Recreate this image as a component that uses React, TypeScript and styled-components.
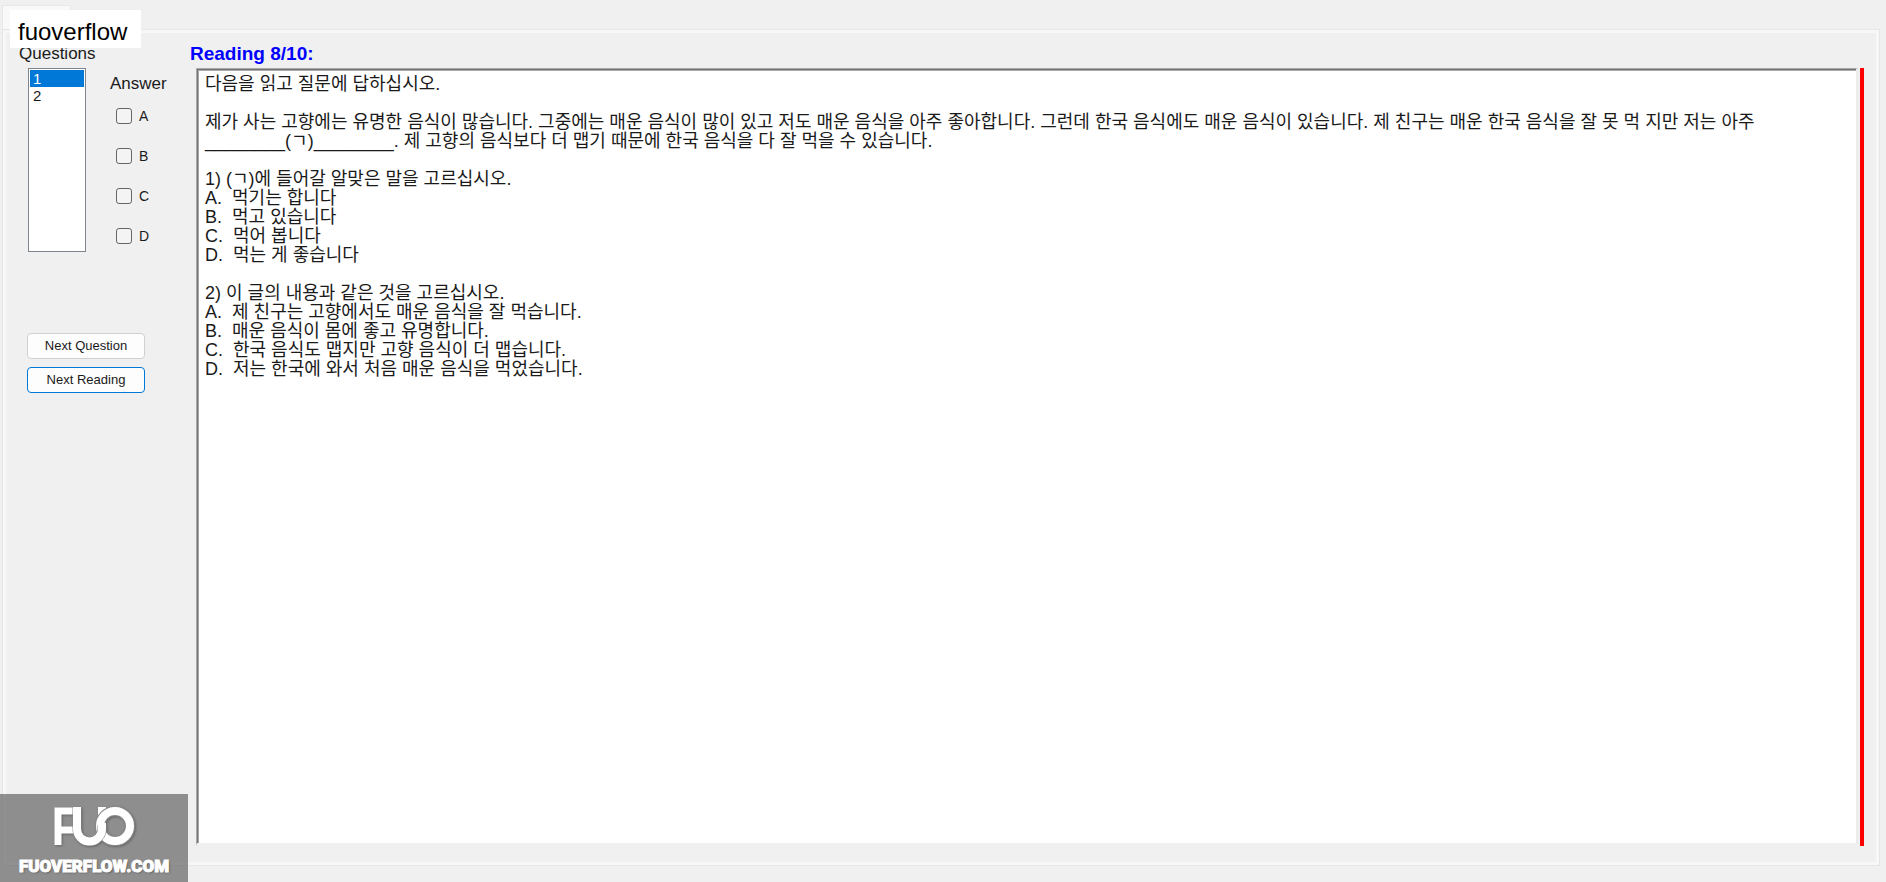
import React, { useState } from "react";
import styled, { createGlobalStyle } from "styled-components";

const sans = `"Liberation Sans", "Noto Sans CJK KR", sans-serif`;

const GlobalStyle = createGlobalStyle`
  *, *::before, *::after { box-sizing: border-box; }
  body { margin: 0; background: #f0f0f0; color: #1a1a1a; font-family: ${sans}; }
`;

const Window = styled.div`
  position: relative;
  display: flex;
  flex-direction: column;
  min-height: 100vh;
  padding: 5px 6px 16px 2px;
`;

const TabStrip = styled.div`
  display: flex;
  height: 24px;
`;

const Tab = styled.div`
  width: 69px;
  background: #f9f9f9;
  border: 1px solid #e8e8e8;
  border-bottom: none;
`;

const TabPage = styled.main`
  flex: 1;
  display: flex;
  padding: 14px 15px 19px 13px;
  border: 1px solid #e6e6e6;
  box-shadow: inset 0 0 0 3px #f7f7f7;
`;

const Sidebar = styled.aside`
  width: 172px;
  flex-shrink: 0;
  display: flex;
  flex-direction: column;
`;

const Label = styled.label`
  padding-left: 3px;
  font-size: 17px;
  line-height: 20px;
`;

const AnswerArea = styled.div`
  display: flex;
  align-items: flex-start;
  gap: 24px;
  height: 184px;
  margin: 4px 0 0 12px;
`;

const QuestionList = styled.select`
  width: 58px;
  height: 184px;
  padding: 1px;
  appearance: none;
  background: #fff;
  border: 1px solid #7f858c;
  border-radius: 0;
  outline: none;
  overflow: hidden;
  font: 15px/16px ${sans};

  option {
    min-height: 16px;
    padding: 0 3px;
    color: #1a1a1a;
  }
  option:checked {
    background: #0078d7 linear-gradient(#0078d7, #0078d7);
    color: #fff;
    -webkit-text-fill-color: #fff;
  }
`;

const Answers = styled.fieldset`
  margin: 0;
  padding: 6px 0 0;
  border: none;
  min-width: 0;
`;

const Legend = styled.div`
  font-size: 17px;
  line-height: 20px;
  margin-bottom: 14px;
`;

const Choice = styled.label`
  display: flex;
  align-items: center;
  gap: 7px;
  height: 16px;
  margin: 0 0 24px 6px;
  font-size: 14px;
  line-height: 16px;
`;

const Tick = styled.input`
  appearance: none;
  width: 16px;
  height: 16px;
  margin: 0;
  background: #f4f4f4;
  border: 1px solid #666;
  border-radius: 3px;
  &:checked { background: #0078d7; }
`;

const Actions = styled.div`
  display: flex;
  flex-direction: column;
  gap: 8px;
  margin: 81px 0 0 11px;
`;

const ActionButton = styled.button<{ $focused?: boolean }>`
  width: 118px;
  height: 26px;
  padding: 0;
  background: #fdfdfd;
  border: 1px solid ${(p) => (p.$focused ? "#0078d7" : "#d0d0d0")};
  border-radius: 4px;
  color: #1a1a1a;
  font: 13px/16px ${sans};
`;

const Reader = styled.section`
  flex: 1;
  min-width: 0;
  display: flex;
  flex-direction: column;
`;

const ReadingTitle = styled.h1`
  margin: 0 0 4px 2px;
  color: #0000ff;
  font-size: 19px;
  line-height: 20px;
  font-weight: bold;
`;

const PassageFrame = styled.div`
  flex: 1;
  display: flex;
  margin-left: 8px;
  padding-right: 2px;
  border-right: 4px solid #ff0000;
`;

const Passage = styled.textarea`
  flex: 1;
  min-width: 0;
  padding: 6px 8px;
  resize: none;
  outline: none;
  background: #fff;
  border-style: solid;
  border-width: 1px 2px 3px 1px;
  border-color: #a8a8a8 #ececec #f0f0f0 #a8a8a8;
  border-radius: 0;
  box-shadow: inset 1px 1px 0 #747474, inset 2px 2px 0 #a8a8a8;
  color: #1a1a1a;
  font: 18px/19px ${sans};
  word-break: keep-all;
`;

const NameTag = styled.div`
  position: absolute;
  top: 10px;
  left: 10px;
  padding: 9px 14px 3px 8px;
  background: #fff;
  color: #000;
  font-size: 24px;
  line-height: 26px;
`;

const Watermark = styled.div`
  position: absolute;
  left: 0;
  bottom: 0;
  width: 188px;
  height: 88px;
  padding-top: 12px;
  display: flex;
  flex-direction: column;
  align-items: center;
  background: rgba(100, 100, 100, 0.7);
  color: #fff;
`;

const WatermarkText = styled.span`
  margin-top: 6px;
  font: 900 17px/24px Roboto, "Liberation Sans", sans-serif;
  -webkit-text-stroke: 1px #fff;
  text-shadow: 1px 1px 2px #555;
`;

const LogoMark = styled.svg`
  filter: drop-shadow(1px 1px 1px #666);
`;

const Logo = () => (
  <LogoMark width="84" height="42" viewBox="0 0 84 42" aria-hidden="true">
    <g fill="none" stroke="#fff" strokeWidth="8">
      <path d="M6 39V5H24M6 24H24" strokeWidth="7" />
      <path d="M50 24V1" />
      <circle cx="63" cy="20" r="15" stroke="#8a8a8a" strokeWidth="10" />
      <circle cx="63" cy="20" r="15" />
      <path d="M25 1V23a12 12 0 0 0 25 0V19" stroke="#8a8a8a" strokeWidth="9" />
      <path d="M25 1V23a12 12 0 0 0 25 0V17" />
    </g>
  </LogoMark>
);

const passage = `다음을 읽고 질문에 답하십시오.

제가 사는 고향에는 유명한 음식이 많습니다. 그중에는 매운 음식이 많이 있고 저도 매운 음식을 아주 좋아합니다. 그런데 한국 음식에도 매운 음식이 있습니다. 제 친구는 매운 한국 음식을 잘 못 먹 지만 저는 아주 ________(ㄱ)________. 제 고향의 음식보다 더 맵기 때문에 한국 음식을 다 잘 먹을 수 있습니다.

1) (ㄱ)에 들어갈 알맞은 말을 고르십시오.
A.  먹기는 합니다
B.  먹고 있습니다
C.  먹어 봅니다
D.  먹는 게 좋습니다

2) 이 글의 내용과 같은 것을 고르십시오.
A.  제 친구는 고향에서도 매운 음식을 잘 먹습니다.
B.  매운 음식이 몸에 좋고 유명합니다.
C.  한국 음식도 맵지만 고향 음식이 더 맵습니다.
D.  저는 한국에 와서 처음 매운 음식을 먹었습니다.`;

export default function App() {
  const [question, setQuestion] = useState("1");

  return (
    <Window>
      <GlobalStyle />
      <TabStrip>
        <Tab />
      </TabStrip>
      <TabPage>
        <Sidebar>
          <Label htmlFor="questions">Questions</Label>
          <AnswerArea>
            <QuestionList
              id="questions"
              size={10}
              value={question}
              onChange={(e) => setQuestion(e.target.value)}
            >
              <option value="1">1</option>
              <option value="2">2</option>
            </QuestionList>
            <Answers aria-labelledby="answer-label">
              <Legend id="answer-label">Answer</Legend>
              {["A", "B", "C", "D"].map((letter) => (
                <Choice key={letter}>
                  <Tick type="checkbox" name="answer" value={letter} />
                  {letter}
                </Choice>
              ))}
            </Answers>
          </AnswerArea>
          <Actions>
            <ActionButton type="button">Next Question</ActionButton>
            <ActionButton type="button" $focused>
              Next Reading
            </ActionButton>
          </Actions>
        </Sidebar>
        <Reader>
          <ReadingTitle id="reading-title">Reading 8/10:</ReadingTitle>
          <PassageFrame>
            <Passage
              aria-labelledby="reading-title"
              readOnly
              spellCheck={false}
              value={passage}
            />
          </PassageFrame>
        </Reader>
      </TabPage>
      <NameTag>fuoverflow</NameTag>
      <Watermark>
        <Logo />
        <WatermarkText>FUOVERFLOW.COM</WatermarkText>
      </Watermark>
    </Window>
  );
}
